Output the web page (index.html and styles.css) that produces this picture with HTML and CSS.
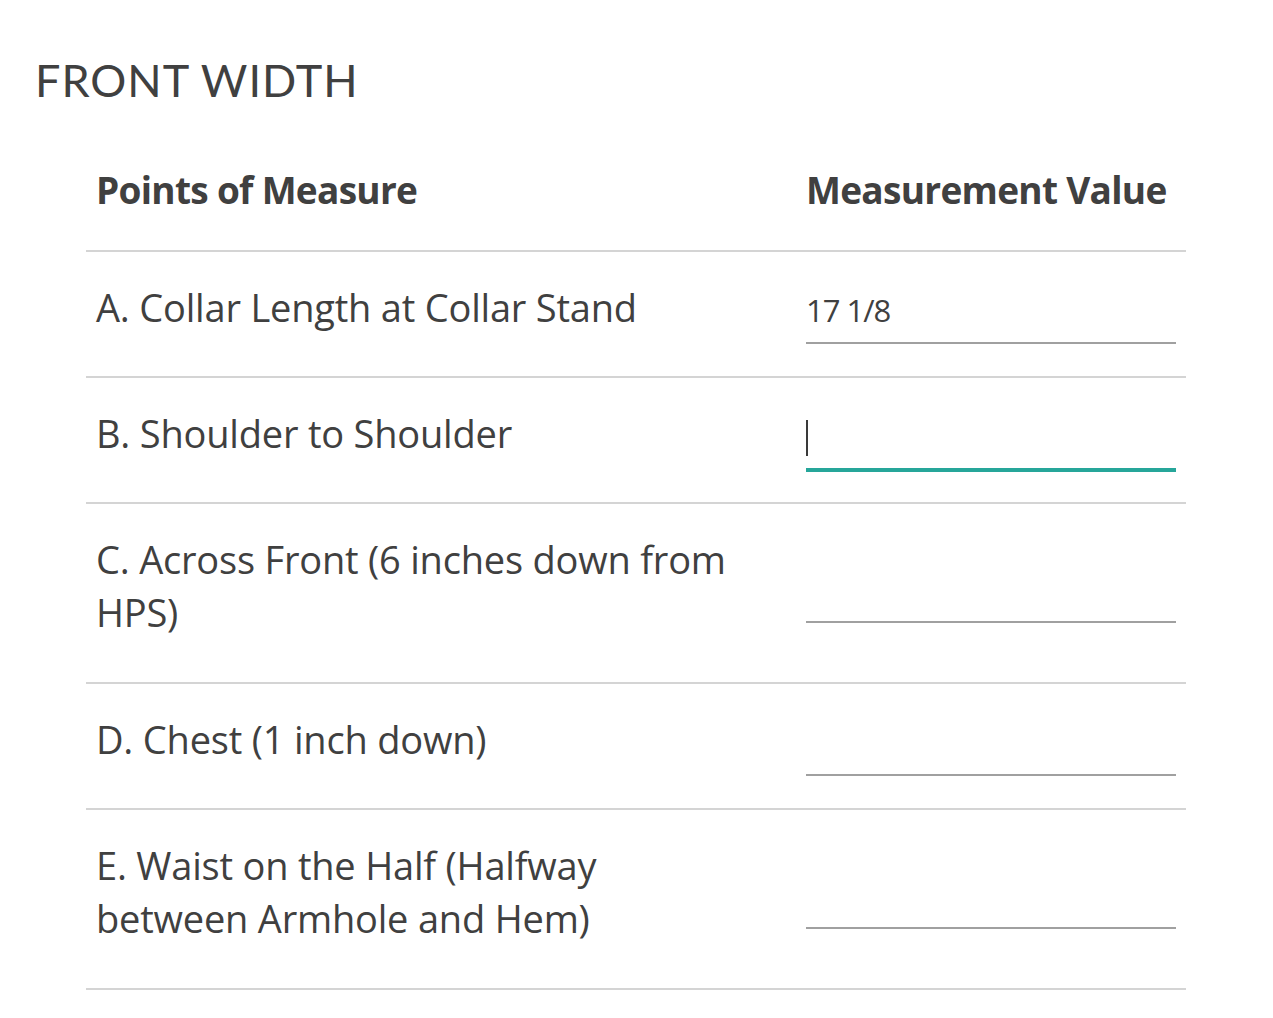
FILE: index.html
```html
<!DOCTYPE html>
<html>
<head>
<meta charset="utf-8">
<link rel="stylesheet" href="styles.css">
</head>
<body>
<div class="page">
  <h1 class="title">FRONT WIDTH</h1>
  <table class="pom">
    <colgroup>
      <col class="c1">
      <col class="c2">
    </colgroup>
    <thead>
      <tr>
        <th>Points of Measure</th>
        <th>Measurement Value</th>
      </tr>
    </thead>
    <tbody>
      <tr>
        <td class="name">A. Collar Length at Collar Stand</td>
        <td class="val"><div class="field"><span class="value">17 1/8</span></div></td>
      </tr>
      <tr>
        <td class="name">B. Shoulder to Shoulder</td>
        <td class="val"><div class="field focused"><span class="caret"></span></div></td>
      </tr>
      <tr>
        <td class="name tall">C. Across Front (6 inches down from HPS)</td>
        <td class="val"><div class="field"></div></td>
      </tr>
      <tr>
        <td class="name">D. Chest (1 inch down)</td>
        <td class="val"><div class="field"></div></td>
      </tr>
      <tr>
        <td class="name tall">E. Waist on the Half (Halfway between Armhole and Hem)</td>
        <td class="val"><div class="field"></div></td>
      </tr>
    </tbody>
  </table>
</div>
</body>
</html>
```
FILE: styles.css
```css
html, body {
  margin: 0;
  padding: 0;
  background: #ffffff;
}
.page {
  padding: 50px 0 0 35px;
  color: #404040;
}
.title {
  margin: 0;
  font-family: Lato, "Open Sans", sans-serif;
  font-weight: 400;
  font-size: 45px;
  line-height: 60px;
  color: #404040;
  letter-spacing: 1px;
}
.pom {
  margin: 52px 0 0 51px;
  width: 1100px;
  table-layout: fixed;
  border-collapse: collapse;
  font-family: "Open Sans", sans-serif;
}
.pom .c1 {
  width: 710px;
}
.pom .c2 {
  width: 390px;
}
.pom th {
  text-align: left;
  font-weight: 700;
  font-size: 37px;
  line-height: 48px;
  padding: 4px 10px 36px 10px;
  color: #404040;
  border-bottom: 2px solid #d4d4d4;
  letter-spacing: -0.7px;
  white-space: nowrap;
}
.pom td {
  font-size: 38px;
  line-height: 53px;
  border-bottom: 2px solid #d4d4d4;
  color: #404040;
  letter-spacing: -0.2px;
}
.pom td.name {
  padding: 29px 60px 42px 10px;
  vertical-align: top;
}
.pom td.name.tall {
  padding-bottom: 43px;
}
.pom td.val {
  padding: 0 10px;
  vertical-align: middle;
}
.field {
  box-sizing: border-box;
  height: 60px;
  border-bottom: 2px solid #a0a0a0;
  display: flex;
  align-items: flex-end;
  padding-bottom: 12px;
}
.field.focused {
  border-bottom-color: #26a69a;
  box-shadow: 0 2px 0 0 #26a69a;
}
.value {
  font-size: 31px;
  line-height: 40px;
  letter-spacing: -1px;
}
.caret {
  display: block;
  width: 2px;
  height: 36px;
  background: #3a3a3a;
}
```
